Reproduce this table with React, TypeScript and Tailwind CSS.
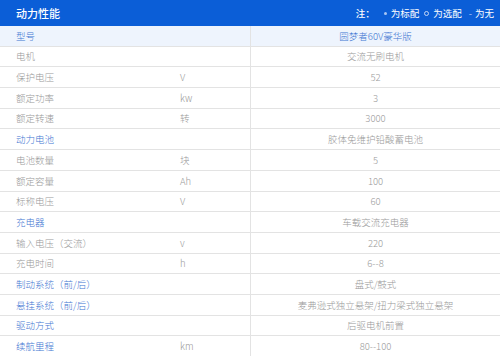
const rows: { label: string; unit?: string; value: string; blue?: boolean }[] = [
  { label: '电机', value: '交流无刷电机' },
  { label: '保护电压', unit: 'V', value: '52' },
  { label: '额定功率', unit: 'kw', value: '3' },
  { label: '额定转速', unit: '转', value: '3000' },
  { label: '动力电池', value: '胶体免维护铅酸蓄电池', blue: true },
  { label: '电池数量', unit: '块', value: '5' },
  { label: '额定容量', unit: 'Ah', value: '100' },
  { label: '标称电压', unit: 'V', value: '60' },
  { label: '充电器', value: '车载交流充电器', blue: true },
  { label: '输入电压（交流）', unit: 'v', value: '220' },
  { label: '充电时间', unit: 'h', value: '6--8' },
  { label: '制动系统（前/后）', value: '盘式/鼓式', blue: true },
  { label: '悬挂系统（前/后）', value: '麦弗逊式独立悬架/扭力梁式独立悬架', blue: true },
  { label: '驱动方式', value: '后驱电机前置', blue: true },
  { label: '续航里程', unit: 'km', value: '80--100', blue: true },
]

export default function App() {
  return (
    <div
      className="w-[500px] h-[356px] overflow-hidden bg-white text-[9.5px] font-light"
      style={{ fontFamily: '"Noto Sans CJK SC", "Noto Sans", sans-serif' }}
    >
      <div className="flex h-[26px] items-center justify-between bg-[#0b5ed7] pl-4 pr-[6px] text-white">
        <span className="text-[11px] font-medium">动力性能</span>
        <div className="flex items-center text-[9.5px] font-normal">
          <span className="mr-[9px] font-medium">注：</span>
          <span className="h-[3px] w-[3px] rounded-full bg-[#a9c6f3]" />
          <span className="ml-[4px]">为标配</span>
          <span className="ml-[5px] h-[5px] w-[5px] rounded-full border border-[#c2d6f6]" />
          <span className="ml-[4px]">为选配</span>
          <span className="ml-[7px] text-[#a9c6f3]">-</span>
          <span className="ml-[3px]">为无</span>
        </div>
      </div>

      <div className="flex h-[20.7px] items-center border-b border-[#e3e3e3] bg-[#eef4fd] text-[#3f76d2]">
        <div className="w-[250px] pl-4">型号</div>
        <div className="flex h-full flex-1 items-center justify-center border-l border-[#e3e3e3]">
          圆梦者60V豪华版
        </div>
      </div>

      {rows.map((r) => (
        <div key={r.label} className="flex h-[20.7px] items-center border-b border-[#e3e3e3]">
          <div className={`w-[180px] pl-4 ${r.blue ? 'text-[#3f76d2]' : 'text-[#999999]'}`}>{r.label}</div>
          <div className="w-[70px] text-[#999999]">{r.unit}</div>
          <div className="flex h-full flex-1 items-center justify-center border-l border-[#e3e3e3] text-[#999999]">
            {r.value}
          </div>
        </div>
      ))}
    </div>
  )
}
